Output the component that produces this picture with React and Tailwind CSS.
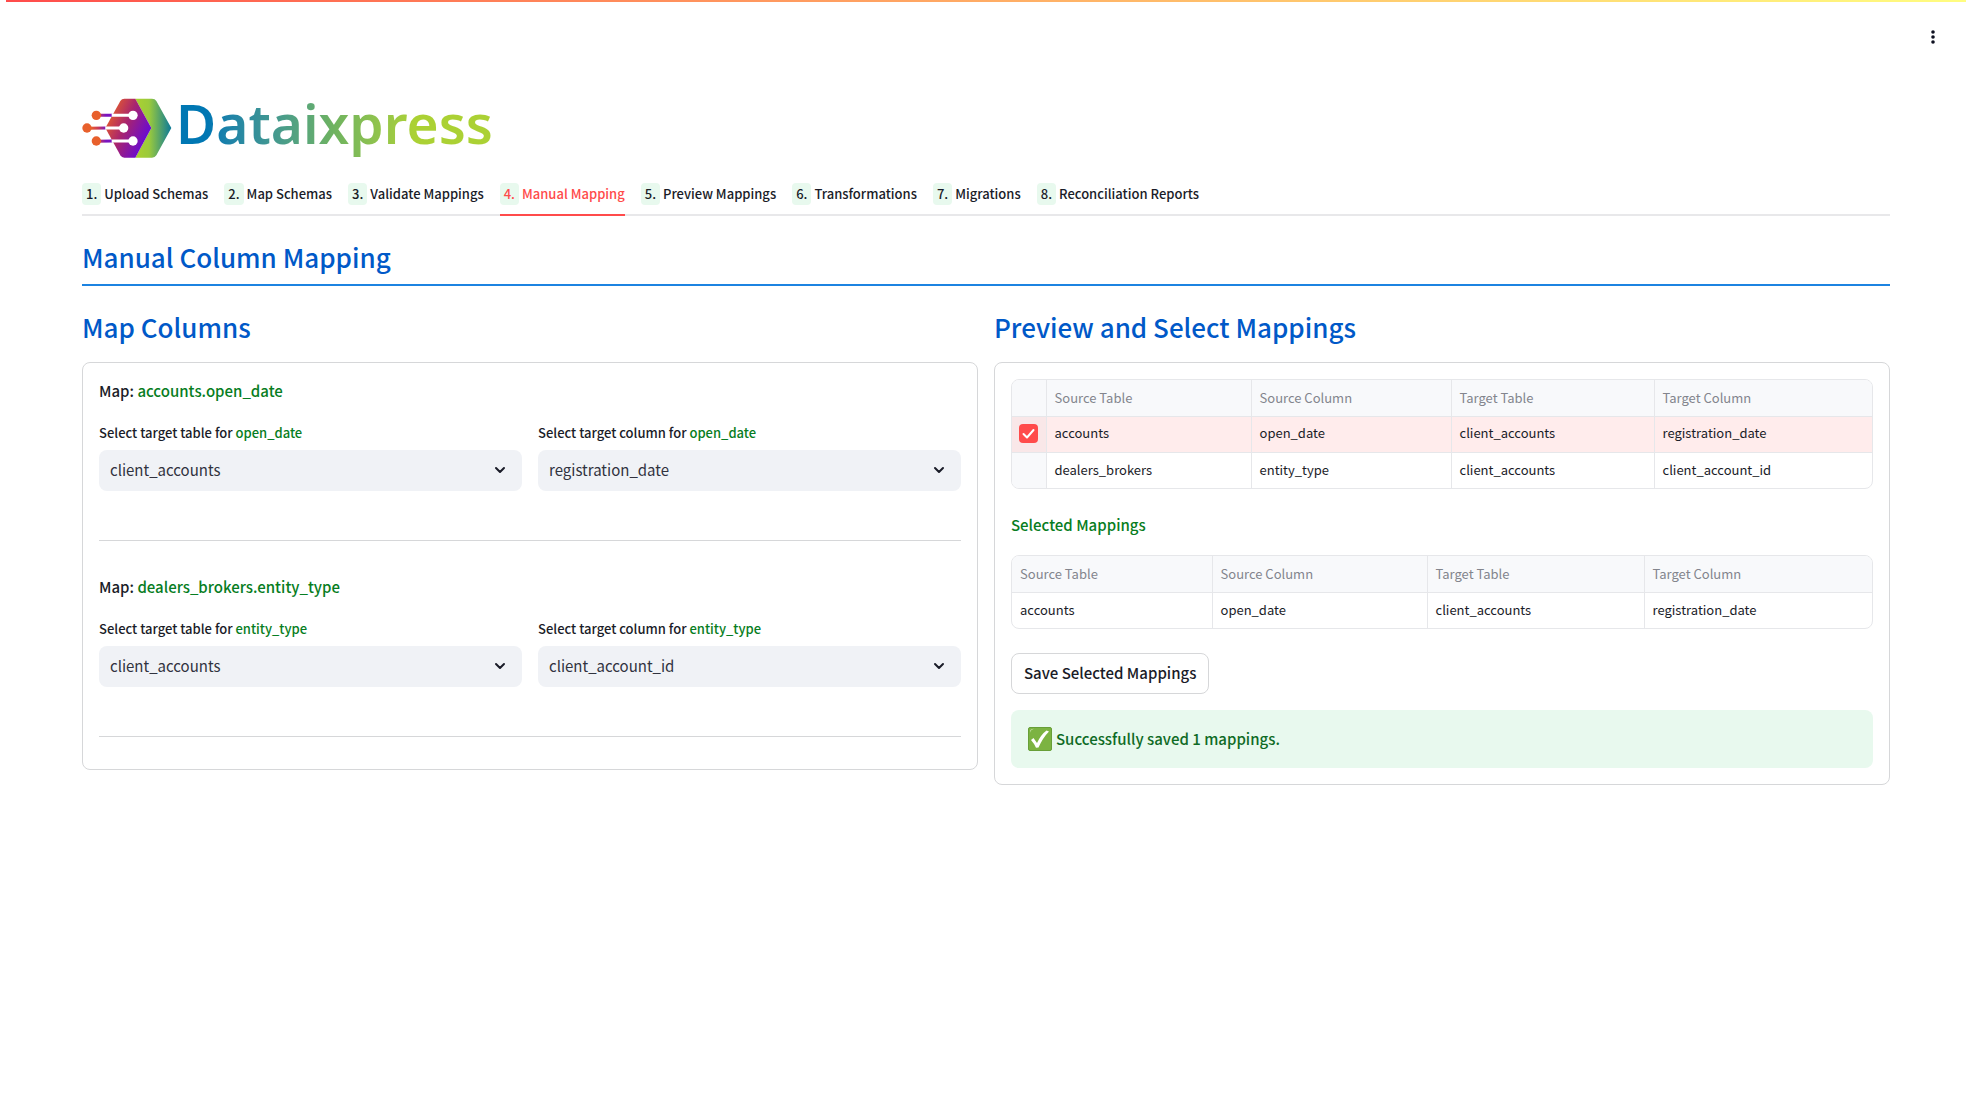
import { useState } from "react";

const tabs = [
  "Upload Schemas",
  "Map Schemas",
  "Validate Mappings",
  "Manual Mapping",
  "Preview Mappings",
  "Transformations",
  "Migrations",
  "Reconciliation Reports",
];

const columns = ["Source Table", "Source Column", "Target Table", "Target Column"];

const initialMappings = [
  { table: "accounts", column: "open_date", targetTable: "client_accounts", targetColumn: "registration_date" },
  { table: "dealers_brokers", column: "entity_type", targetTable: "client_accounts", targetColumn: "client_account_id" },
];

function Logo() {
  return (
    <div className="flex items-center gap-1 h-[60px]">
      <svg className="w-[90px] h-[60px] shrink-0" viewBox="35 37 270 180" aria-hidden="true">
        <defs>
          <linearGradient id="core" gradientUnits="userSpaceOnUse" x1="118" y1="80" x2="238" y2="135">
            <stop offset="0" stopColor="#e2592f" />
            <stop offset="0.45" stopColor="#a8246f" />
            <stop offset="1" stopColor="#6a0bd0" />
          </linearGradient>
          <linearGradient id="shell" gradientUnits="userSpaceOnUse" x1="200" y1="0" x2="303" y2="0">
            <stop offset="0" stopColor="#a9d032" />
            <stop offset="0.35" stopColor="#9bca3c" />
            <stop offset="1" stopColor="#0c7a98" />
          </linearGradient>
          <linearGradient id="wire" gradientUnits="userSpaceOnUse" x1="62" y1="0" x2="126" y2="0">
            <stop offset="0" stopColor="#ea5f2b" />
            <stop offset="0.35" stopColor="#c7395a" />
            <stop offset="0.7" stopColor="#7a14c0" />
          </linearGradient>
        </defs>
        <path d="M195 39h50q9 0 13 7l45 81-45 82q-4 7-13 7h-50l48-89z" fill="url(#shell)" />
        <path d="M162 39h33l48 88-48 89h-33q-8 0-12-7l-45-82 45-81q4-7 12-7z" fill="url(#core)" />
        <g stroke="url(#wire)" strokeWidth="9">
          <path d="M80 88.500L126 89M80 166.500L126 166M52 127.500L106 127" />
        </g>
        <g fill="#e8602c">
          <circle cx="78" cy="89" r="14" />
          <circle cx="50" cy="127" r="14" />
          <circle cx="78" cy="166" r="14" />
        </g>
        <path d="M124 89h64M105 127h55M124 166h64" stroke="#fff" strokeWidth="9" />
        <g fill="#fff">
          <circle cx="188" cy="89" r="14" />
          <circle cx="160" cy="127" r="14" />
          <circle cx="188" cy="166" r="14" />
        </g>
      </svg>
      <span className="bg-linear-to-r from-[#0077b3] from-10% via-[#6fb35f] via-50% to-[#abd134] to-75% bg-clip-text text-transparent pb-2.5 font-['Noto_Sans',sans-serif] font-semibold text-[55px] leading-[76px]">
        Dataixpress
      </span>
    </div>
  );
}

function TabBar({ active, onSelect }) {
  return (
    <nav className="mt-[25px] flex gap-4 border-b-2 border-[#e8e8ea]">
      {tabs.map((tab, i) => (
        <button
          key={tab}
          onClick={() => onSelect(i)}
          className={
            i === active
              ? "-mb-0.5 flex items-center gap-[3px] border-b-2 border-[#ff4b4b] pb-[9px] text-[13px] leading-[22px] font-medium text-[#ff4b4b]"
              : "-mb-0.5 flex items-center gap-[3px] border-b-2 border-transparent pb-[9px] text-[13px] leading-[22px] font-medium"
          }
        >
          <span className="rounded bg-[#e8f9ee] px-1">{i + 1}.</span>
          {tab}
        </button>
      ))}
    </nav>
  );
}

function SelectField({ id, kind, column, options }) {
  return (
    <div className="flex-1">
      <label htmlFor={id} className="block text-[13px] leading-5 font-medium">
        Select target {kind} for <span className="text-[#077d22]">{column}</span>
      </label>
      <div className="relative mt-[7px]">
        <select
          id={id}
          className="block h-[41px] w-full appearance-none rounded-lg bg-[#f0f2f6] pl-[11px] pr-10 text-[15px] text-[#31333f]"
        >
          {options.map((option) => (
            <option key={option}>{option}</option>
          ))}
        </select>
        <svg
          className="pointer-events-none absolute top-4 right-4 w-3 h-2"
          viewBox="0 0 12 8"
          fill="none"
          stroke="#1a1c28"
          strokeWidth="2"
          strokeLinecap="round"
          strokeLinejoin="round"
        >
          <path d="M2 2l4 4 4-4" />
        </svg>
      </div>
    </div>
  );
}

function MappingForm({ mapping }) {
  return (
    <div className="mb-[34px] border-b border-[#d6d7d9] pb-[49px] last:mb-4">
      <p className="text-[15px] leading-6 font-medium">
        Map: <span className="text-[#077d22]">{mapping.table}.{mapping.column}</span>
      </p>
      <div className="mt-5 flex gap-4">
        <SelectField
          id={`${mapping.column}-table`}
          kind="table"
          column={mapping.column}
          options={[mapping.targetTable]}
        />
        <SelectField
          id={`${mapping.column}-column`}
          kind="column"
          column={mapping.column}
          options={[mapping.targetColumn]}
        />
      </div>
    </div>
  );
}

function MappingCells({ mapping }) {
  return [mapping.table, mapping.column, mapping.targetTable, mapping.targetColumn].map((value, i) => (
    <td key={i} className="border-t border-l border-[#e6e7ea] px-2 pb-0.5 first:border-l-0">
      {value}
    </td>
  ));
}

export default function App() {
  const [activeTab, setActiveTab] = useState(3);
  const [selected, setSelected] = useState([0]);

  const toggle = (i) => {
    setSelected(selected.includes(i) ? selected.filter((s) => s !== i) : [...selected, i]);
  };

  return (
    <div className="min-h-screen bg-white font-['Noto_Sans_CJK_SC',sans-serif] text-[#1a1c28]">
      {/* Top decoration and menu */}
      <header>
        <div className="mx-1.5 h-0.5 bg-linear-to-r from-[#ff4b4b] to-[#fffd80]" />
        <div className="flex h-[70px] items-center justify-end pr-[31px]">
          <button aria-label="Menu" className="flex h-4 w-4 items-center justify-center">
            <svg className="h-4 w-4" viewBox="0 0 16 16" fill="#0e1020">
              <circle cx="8" cy="3" r="1.800" />
              <circle cx="8" cy="8" r="1.800" />
              <circle cx="8" cy="13" r="1.800" />
            </svg>
          </button>
        </div>
      </header>

      <main className="px-[82px] pt-[26px]">
        <Logo />
        <TabBar active={activeTab} onSelect={setActiveTab} />

        <h1 className="mt-[23px] border-b-2 border-[#1c83e1] pb-[9px] text-[26px] leading-9 font-medium text-[#0059c8]">
          Manual Column Mapping
        </h1>

        <div className="mt-[23px] flex items-start gap-4">
          {/* Column mapping forms */}
          <section className="flex-1">
            <h2 className="mb-[17px] text-[26px] leading-9 font-medium text-[#0059c8]">Map Columns</h2>
            <div className="rounded-lg border border-[#d6d7d9] p-4">
              {initialMappings.map((mapping) => (
                <MappingForm key={mapping.column} mapping={mapping} />
              ))}
            </div>
          </section>

          {/* Preview */}
          <section className="flex-1">
            <h2 className="mb-[17px] text-[26px] leading-9 font-medium text-[#0059c8]">Preview and Select Mappings</h2>
            <div className="rounded-lg border border-[#d6d7d9] p-4">
              <div className="overflow-hidden rounded-lg border border-[#e6e7ea]">
                <table className="w-full table-fixed text-left text-[13px]">
                  <colgroup>
                    <col className="w-[34px]" />
                    <col className="w-[205px]" />
                    <col className="w-[200px]" />
                    <col className="w-[203px]" />
                    <col />
                  </colgroup>
                  <thead>
                    <tr className="h-9 bg-[#f8f9fb] text-[#83858d]">
                      <th aria-label="Selected" />
                      {columns.map((name) => (
                        <th key={name} className="border-l border-[#e6e7ea] px-2 pb-px font-normal">{name}</th>
                      ))}
                    </tr>
                  </thead>
                  <tbody>
                    {initialMappings.map((mapping, i) => (
                      <tr key={mapping.column} className={selected.includes(i) ? "h-9 bg-[#ffecec]" : "h-9"}>
                        <td
                          className={
                            selected.includes(i)
                              ? "border-t border-[#e6e7ea] bg-[#f9e7e8] pb-0.5"
                              : "border-t border-[#e6e7ea] bg-[#f8f9fb] pb-0.5"
                          }
                        >
                          <div className="relative mx-auto h-[19px] w-[19px]">
                            <input
                              type="checkbox"
                              aria-label={`Select ${mapping.column}`}
                              checked={selected.includes(i)}
                              onChange={() => toggle(i)}
                              className="block h-full w-full appearance-none rounded checked:bg-[#ff4b4b]"
                            />
                            {selected.includes(i) && (
                              <svg
                                className="pointer-events-none absolute inset-0"
                                viewBox="0 0 19 19"
                                fill="none"
                                stroke="#fff"
                                strokeWidth="2"
                                strokeLinecap="round"
                                strokeLinejoin="round"
                              >
                                <path d="M4.500 10l3.500 3.500L14.500 6" />
                              </svg>
                            )}
                          </div>
                        </td>
                        <MappingCells mapping={mapping} />
                      </tr>
                    ))}
                  </tbody>
                </table>
              </div>

              <h3 className="mt-6 mb-[18px] text-[15px] leading-6 font-medium text-[#077d22]">Selected Mappings</h3>

              <div className="overflow-hidden rounded-lg border border-[#e6e7ea]">
                <table className="w-full table-fixed text-left text-[13px]">
                  <colgroup>
                    <col className="w-[200px]" />
                    <col className="w-[215px]" />
                    <col className="w-[217px]" />
                    <col />
                  </colgroup>
                  <thead>
                    <tr className="h-9 bg-[#f8f9fb] text-[#83858d]">
                      {columns.map((name) => (
                        <th key={name} className="border-l border-[#e6e7ea] px-2 font-normal first:border-l-0">{name}</th>
                      ))}
                    </tr>
                  </thead>
                  <tbody>
                    {selected.map((i) => (
                      <tr key={i} className="h-9">
                        <MappingCells mapping={initialMappings[i]} />
                      </tr>
                    ))}
                  </tbody>
                </table>
              </div>

              <button className="mt-6 block h-[41px] rounded-lg border border-[#d6d7d9] px-3 text-[15px] font-medium">
                Save Selected Mappings
              </button>

              <div role="status" className="mt-4 flex h-[58px] items-center gap-1 rounded-lg bg-[#e8f9ee] px-[17px] text-[15px] font-medium text-[#0f6b25]">
                <svg className="h-6 w-6" viewBox="0 0 24 24" aria-hidden="true">
                  <rect x="0.500" y="0.500" width="23" height="23" rx="1.500" fill="#7cb342" stroke="#689f38" />
                  <path d="M2 4q0-2 4-2.300-3.500 1-4 4z" fill="#c5e1a5" />
                  <path d="M3 13l2.500-2 3.500 5q4-8.500 9.500-12.500l2.500 1q-6 6-10.500 16l-2.500.3q-2-4.500-5-7.800z" fill="#fff" />
                </svg>
                Successfully saved 1 mappings.
              </div>
            </div>
          </section>
        </div>
      </main>
    </div>
  );
}
